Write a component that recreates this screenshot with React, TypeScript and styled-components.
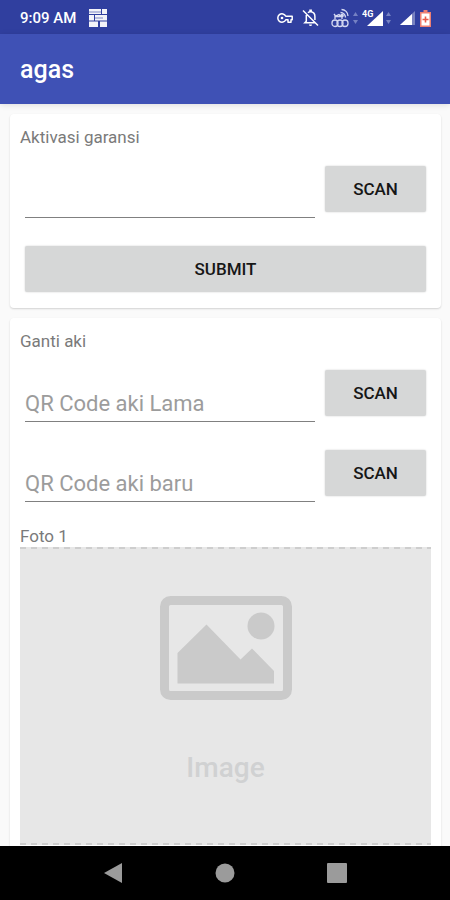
import React from "react";
import styled, { createGlobalStyle } from "styled-components";

const GlobalStyle = createGlobalStyle`
  *, *::before, *::after { box-sizing: border-box; }
  body { margin: 0; background: #fafafa; font-family: Roboto, "Liberation Sans", sans-serif; }
  button, input { font: inherit; }
`;

const Screen = styled.div`
  display: flex;
  flex-direction: column;
  height: 100vh;
  overflow: hidden;
  color: #111;
`;

const StatusBar = styled.div`
  flex: none;
  display: flex;
  align-items: center;
  justify-content: space-between;
  height: 34px;
  padding: 2px 19px 0 20px;
  background: #303f9f;
  color: #fff;
`;

const StatusGroup = styled.div<{ $gap: number }>`
  display: flex;
  align-items: center;
  gap: ${(p) => p.$gap}px;
  svg { display: block; }
`;

const Clock = styled.time`
  font-size: 15px;
  line-height: 20px;
  font-weight: 500;
`;

const AppBar = styled.header`
  flex: none;
  display: flex;
  align-items: center;
  height: 70px;
  padding: 2px 20px 0;
  background: #3f51b5;
  color: #fff;
  box-shadow: 0 1px 6px rgba(0, 0, 0, 0.12);
  z-index: 1;
`;

const Title = styled.h1`
  margin: 0;
  font-size: 25px;
  line-height: 32px;
  font-weight: 500;
`;

const Content = styled.main`
  flex: 1;
  min-height: 0;
  overflow: hidden;
  display: flex;
  flex-direction: column;
  gap: 10px;
  padding: 10px 9px 0 10px;
`;

const Card = styled.section`
  flex: none;
  padding: 13px 10px 16px;
  background: #fff;
  border-radius: 4px;
  box-shadow: 0 1px 2px rgba(0, 0, 0, 0.16);
`;

const Heading = styled.h2`
  margin: 0 0 19px;
  font-size: 17px;
  line-height: 20px;
  font-weight: 400;
  color: #7a7a7a;
`;

const Fields = styled.form`
  display: grid;
  gap: 28px;
  padding: 0 5px;
`;

const Row = styled.div`
  display: grid;
  grid-template-columns: 1fr 101px;
  align-items: start;
  gap: 10px;
`;

const TextField = styled.input`
  width: 100%;
  min-width: 0;
  height: 52px;
  padding: 16px 0 0;
  border: 0;
  border-bottom: 1px solid #808080;
  border-radius: 0;
  outline: 0;
  background: transparent;
  font-size: 22px;
  color: #222;
  &::placeholder { color: #9c9c9c; opacity: 1; }
`;

const Button = styled.button`
  height: 46px;
  padding: 0;
  border: 0;
  border-radius: 2px;
  background: #d6d7d7;
  box-shadow: 0 0 2px rgba(0, 0, 0, 0.2);
  font-size: 17px;
  font-weight: 500;
  color: #161616;
`;

const Figure = styled.figure`
  margin: 24px 0 0;
`;

const Caption = styled.figcaption`
  padding-bottom: 1px;
  font-size: 17px;
  line-height: 20px;
  color: #7a7a7a;
`;

const dashes = "repeating-linear-gradient(90deg, #cecece 0 6px, #e7e7e7 6px 11px)";

const Photo = styled.div`
  display: flex;
  flex-direction: column;
  align-items: center;
  gap: 50px;
  aspect-ratio: 411 / 298;
  padding-top: 49px;
  background:
    ${dashes} top / 100% 2px no-repeat,
    ${dashes} bottom / 100% 2px no-repeat,
    #e7e7e7;
  svg { display: block; flex: none; }
`;

const PhotoText = styled.span`
  font-size: 28px;
  line-height: 36px;
  font-weight: 500;
  color: #d0d1d2;
`;

const NavBar = styled.nav`
  flex: none;
  display: flex;
  align-items: center;
  justify-content: center;
  gap: 72px;
  height: 54px;
  background: #000;
`;

const NavButton = styled.button`
  display: grid;
  place-items: center;
  width: 40px;
  height: 40px;
  padding: 0;
  border: 0;
  background: none;
  color: #9b9b9b;
`;

const WallIcon = () => (
  <svg width="18" height="18" viewBox="0 0 18 18" fill="#fff" aria-hidden="true">
    <path d="M0 0h12v5H0zM13 0h5v5h-5zM0 6h5v5.500H0zM6 6h12v5.500H6zM0 12.500h9v5.500H0zM11 12.500h7v5.500h-7z" opacity=".94" />
    <path d="M0 3h12M6 9h8" stroke="#303f9f" strokeWidth=".6" />
  </svg>
);

const KeyIcon = () => (
  <svg width="16" height="12" viewBox="0 0 16 12" fill="none" stroke="#fff" strokeWidth="1.500" aria-hidden="true">
    <path d="M8.800 4.200A4.200 4.200 0 1 0 8.800 7.800H11v2.400h3V7.800h1.200V4.200z" strokeLinejoin="round" />
    <circle cx="5" cy="6" r="1.300" fill="#fff" stroke="none" />
  </svg>
);

const BellOffIcon = () => (
  <svg width="17" height="18" viewBox="0 0 17 18" fill="none" stroke="#fff" strokeWidth="1.500" aria-hidden="true">
    <path d="M1 1.500l15 15M4.300 6v6.200L2.800 13.800h10.700M6 3.800C6.600 3.200 7.200 3 8 2.800V1.200h1.200v1.600C11.500 3.300 12.900 5 12.900 7.400V11" />
    <path d="M7 15.500h3a1.500 1.500 0 0 1-3 0z" fill="#fff" stroke="none" />
  </svg>
);

const HotspotIcon = () => (
  <svg width="18" height="20" viewBox="0 0 18 20" fill="none" stroke="#d5d9f2" strokeWidth="1.300" aria-hidden="true">
    <rect x="1" y="12" width="6" height="6.500" rx="3" />
    <rect x="6" y="12" width="6" height="6.500" rx="3" />
    <rect x="11" y="12" width="6" height="6.500" rx="3" />
    <path d="M3 6l1.500 2L8 6.500l2 2M4 11V8.500h7V11M9.500 4.500a5 5 0 0 1 5 5M10.500 1.500A6.500 6.500 0 0 1 17 8" />
    <circle cx="11" cy="7.500" r="1.200" fill="#d5d9f2" />
  </svg>
);

const DataArrows = () => (
  <svg width="5" height="14" viewBox="0 0 5 14" fill="#7581c3" aria-hidden="true">
    <path d="M2.500 1L5 5H0zM2.500 13L5 9H0z" />
  </svg>
);

const MobileSignal = () => (
  <svg width="22" height="18" viewBox="0 0 22 18" fill="#fff" aria-label="4G">
    <path d="M5 17L21 2v15z" />
    <text x="0" y="8" fontSize="9" fontWeight="700" fontFamily="Roboto, sans-serif" stroke="#303f9f" strokeWidth="1" paintOrder="stroke">4G</text>
  </svg>
);

const SignalIcon = () => (
  <svg width="15" height="15" viewBox="0 0 15 15" fill="#fff" aria-hidden="true">
    <path d="M0 14L15 0v14z" opacity=".35" />
    <path d="M0 14L12 3v11z" />
  </svg>
);

const BatteryIcon = () => (
  <svg width="11" height="17" viewBox="0 0 11 17" aria-hidden="true">
    <path d="M3.500 0h4v2H11v15H0V2h3.500z" fill="#ee7f72" />
    <path d="M1.500 3.500h8v12h-8z" fill="#fff" />
    <path d="M5.500 6.500v6M2.500 9.500h6" stroke="#e85a4a" strokeWidth="1.600" />
  </svg>
);

const PictureIcon = () => (
  <svg width="132" height="104" viewBox="0 0 132 104" fill="#cacaca" aria-hidden="true">
    <rect x="4.500" y="4.500" width="123" height="95" rx="6" fill="none" stroke="#cacaca" strokeWidth="9" />
    <circle cx="101" cy="30" r="13.500" />
    <path d="M17.500 57L46.500 28.500 80.500 63.500 92 52.500 114 75V87.500H17.500z" />
  </svg>
);

type ScanRowProps = { name: string; label: string; placeholder?: string };

const ScanRow = ({ name, label, placeholder }: ScanRowProps) => (
  <Row>
    <TextField name={name} type="text" aria-label={label} placeholder={placeholder} />
    <Button type="button">SCAN</Button>
  </Row>
);

export default function App() {
  return (
    <>
      <GlobalStyle />
      <Screen>
        <StatusBar>
          <StatusGroup $gap={13}>
            <Clock>9:09 AM</Clock>
            <WallIcon />
          </StatusGroup>
          <StatusGroup $gap={9}>
            <KeyIcon />
            <StatusGroup $gap={12}>
              <BellOffIcon />
              <StatusGroup $gap={4}>
                <HotspotIcon />
                <DataArrows />
                <StatusGroup $gap={2}>
                  <MobileSignal />
                  <DataArrows />
                </StatusGroup>
              </StatusGroup>
            </StatusGroup>
            <StatusGroup $gap={5}>
              <SignalIcon />
              <BatteryIcon />
            </StatusGroup>
          </StatusGroup>
        </StatusBar>
        <AppBar>
          <Title>agas</Title>
        </AppBar>
        <Content>
          <Card>
            <Heading>Aktivasi garansi</Heading>
            <Fields onSubmit={(e: React.FormEvent) => e.preventDefault()}>
              <ScanRow name="activation" label="Aktivasi garansi" />
              <Button type="submit">SUBMIT</Button>
            </Fields>
          </Card>
          <Card>
            <Heading>Ganti aki</Heading>
            <Fields onSubmit={(e: React.FormEvent) => e.preventDefault()}>
              <ScanRow name="old" label="QR Code aki Lama" placeholder="QR Code aki Lama" />
              <ScanRow name="new" label="QR Code aki baru" placeholder="QR Code aki baru" />
            </Fields>
            <Figure>
              <Caption>Foto 1</Caption>
              <Photo>
                <PictureIcon />
                <PhotoText>Image</PhotoText>
              </Photo>
            </Figure>
          </Card>
        </Content>
        <NavBar>
          <NavButton aria-label="Back">
            <svg width="20" height="22" viewBox="0 0 20 22" fill="currentColor"><path d="M1 11L19 1v20z" /></svg>
          </NavButton>
          <NavButton aria-label="Home">
            <svg width="20" height="20" viewBox="0 0 20 20" fill="currentColor"><circle cx="10" cy="10" r="9.500" /></svg>
          </NavButton>
          <NavButton aria-label="Recent apps">
            <svg width="20" height="20" viewBox="0 0 20 20" fill="currentColor"><rect width="20" height="20" rx="1" /></svg>
          </NavButton>
        </NavBar>
      </Screen>
    </>
  );
}
